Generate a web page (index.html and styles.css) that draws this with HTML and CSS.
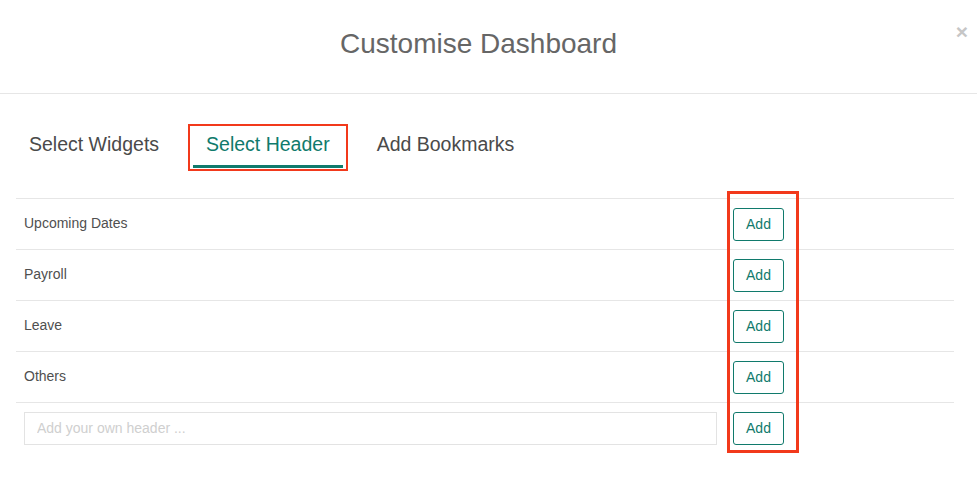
FILE: index.html
```html
<!DOCTYPE html>
<html lang="en">
<head>
<meta charset="utf-8">
<title>Customise Dashboard</title>
<link rel="stylesheet" href="styles.css">
</head>
<body>
<div class="modal">
  <header class="modal-header">
    <h1 class="modal-title">Customise Dashboard</h1>
    <button class="close" type="button" aria-label="Close">×</button>
  </header>
  <nav class="tabs">
    <a class="tab">Select Widgets</a>
    <a class="tab active">Select Header</a>
    <a class="tab">Add Bookmarks</a>
  </nav>
  <div class="list">
    <div class="row"><span class="label">Upcoming Dates</span><button class="add-btn" type="button">Add</button></div>
    <div class="row"><span class="label">Payroll</span><button class="add-btn" type="button">Add</button></div>
    <div class="row"><span class="label">Leave</span><button class="add-btn" type="button">Add</button></div>
    <div class="row"><span class="label">Others</span><button class="add-btn" type="button">Add</button></div>
    <div class="row"><input class="header-input" type="text" placeholder="Add your own header ..."><button class="add-btn" type="button">Add</button></div>
  </div>
</div>
</body>
</html>
```
FILE: styles.css
```css
* { box-sizing: border-box; }
html, body { margin: 0; background: #fff; }
body { font-family: "Liberation Sans", Arial, sans-serif; color: #4a4a4a; }

.modal { width: 977px; height: 477px; background: #fff; }

.modal-header {
  position: relative;
  height: 94px;
  border-bottom: 1px solid #e6e6e6;
  display: flex;
  align-items: center;
  justify-content: center;
  padding: 0 20px 6px 0;
}
.modal-title {
  margin: 0;
  font-size: 28px;
  font-weight: 400;
  color: #666;
  line-height: 32px;
}
.close {
  position: absolute;
  top: 20px;
  right: 9px;
  border: 0;
  background: none;
  padding: 0;
  font-family: "Liberation Sans", Arial, sans-serif;
  font-size: 21px;
  font-weight: 700;
  line-height: 24px;
  color: #c6c6c6;
}

.tabs {
  display: flex;
  gap: 21px;
  padding: 38px 16px 0;
  margin-bottom: 30px;
}
.tab {
  position: relative;
  padding: 0 13px 9px;
  font-size: 19.5px;
  line-height: 24px;
  color: #4a4a4a;
  border-bottom: 3px solid transparent;
}
.tab.active {
  color: #107a6c;
  border-bottom-color: #107a6c;
}
.tab.active::after {
  content: "";
  position: absolute;
  top: -8px;
  left: -5px;
  right: -5px;
  bottom: -6px;
  border: 2.5px solid #f2391b;
}

.list {
  position: relative;
  margin: 0 23px 0 16px;
}
.list::after {
  content: "";
  position: absolute;
  top: -7px;
  bottom: 0;
  left: 711px;
  width: 66px;
  border: 3px solid #f2391b;
}
.row {
  height: 51px;
  border-top: 1px solid #e6e6e6;
  display: grid;
  grid-template-columns: 1fr 51px;
  column-gap: 16px;
  align-items: center;
  padding: 0 170px 0 8px;
}
.label {
  font-size: 14px;
  color: #4f4f4f;
  margin-top: -2px;
}
.add-btn {
  width: 51px;
  height: 33px;
  border: 1px solid #107a6c;
  border-radius: 3px;
  background: #fff;
  color: #107a6c;
  font-family: "Liberation Sans", Arial, sans-serif;
  font-size: 14px;
  padding: 0;
}
.header-input {
  height: 33px;
  width: 100%;
  border: 1px solid #e3e3e3;
  padding: 0 12px;
  font-family: "Liberation Sans", Arial, sans-serif;
  font-size: 14px;
  color: #4a4a4a;
  outline: none;
}
.header-input::placeholder { color: #cfcfcf; }
```
